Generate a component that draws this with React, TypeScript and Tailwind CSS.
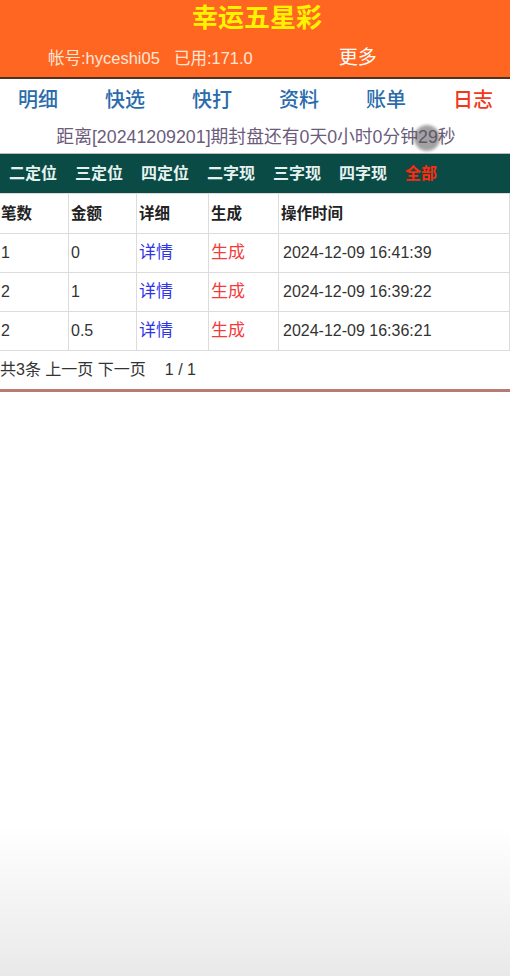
import React from "react";

const FONT = { fontFamily: '"Liberation Sans", "Noto Sans CJK SC", sans-serif' };

const navItems = [
  { label: "明细", active: false },
  { label: "快选", active: false },
  { label: "快打", active: false },
  { label: "资料", active: false },
  { label: "账单", active: false },
  { label: "日志", active: true },
];

const playTabs = [
  { label: "二定位", active: false },
  { label: "三定位", active: false },
  { label: "四定位", active: false },
  { label: "二字现", active: false },
  { label: "三字现", active: false },
  { label: "四字现", active: false },
  { label: "全部", active: true },
];

const records = [
  { count: "1", amount: "0", time: "2024-12-09 16:41:39" },
  { count: "2", amount: "1", time: "2024-12-09 16:39:22" },
  { count: "2", amount: "0.5", time: "2024-12-09 16:36:21" },
];

function Header() {
  return (
    <div className="bg-[#ff6621] h-[79px] border-b-2 border-[#4d3224]">
      <div className="h-[36px] flex items-center justify-center">
        <span className="text-[26px] font-bold text-[#fff200] leading-none pl-[4px]">
          幸运五星彩
        </span>
      </div>
      <div className="h-[41px] flex items-center pt-[4px] text-[#fde6d8]">
        <span className="ml-[48px] text-[16.5px]">帐号:hyceshi05</span>
        <span className="ml-[14px] text-[16.5px]">已用:171.0</span>
        <span className="ml-[86px] text-[19px] text-white">更多</span>
      </div>
    </div>
  );
}

function Nav() {
  return (
    <div className="bg-white">
      <div className="h-[42px] flex items-center pl-[18px] gap-[47px]">
        {navItems.map((item) => (
          <span
            key={item.label}
            className={
              item.active
                ? "text-[20px] font-medium text-[#f0381c]"
                : "text-[20px] font-medium text-[#2a6cab]"
            }
          >
            {item.label}
          </span>
        ))}
      </div>
      <div className="relative h-[32px] flex items-center justify-center">
        <span className="text-[17.8px] text-[#6b5c7c] pl-[2px]">
          距离[20241209201]期封盘还有0天0小时0分钟29秒
        </span>
        {/* touch indicator */}
        <div className="absolute left-[414px] top-[4px] w-[26px] h-[26px] rounded-full bg-[#555]/55 blur-[1.5px]" />
      </div>
    </div>
  );
}

function PlayTabs() {
  return (
    <div className="border-t border-[#bbb]">
      <div className="h-[39px] bg-[#0a4b45] flex items-center pl-[9px] gap-[18px]">
        {playTabs.map((tab) => (
          <span
            key={tab.label}
            className={
              tab.active
                ? "text-[16px] font-bold text-[#ff2a10]"
                : "text-[16px] font-bold text-[#e6f2f0]"
            }
          >
            {tab.label}
          </span>
        ))}
      </div>
    </div>
  );
}

function RecordTable() {
  const cell = "border border-[#dcdcdc] px-[2px] text-left align-middle";
  const head = cell + " font-bold text-[15.5px] text-[#222]";
  return (
    <table className="ml-[-2px] w-[512px] border-collapse text-[16px] text-[#333]">
      <colgroup>
        <col className="w-[70px]" />
        <col className="w-[68px]" />
        <col className="w-[72px]" />
        <col className="w-[70px]" />
        <col />
      </colgroup>
      <thead>
        <tr className="h-[40px]">
          <th className={head}>笔数</th>
          <th className={head}>金额</th>
          <th className={head}>详细</th>
          <th className={head}>生成</th>
          <th className={head}>操作时间</th>
        </tr>
      </thead>
      <tbody>
        {records.map((r) => (
          <tr key={r.time} className="h-[39px]">
            <td className={cell}>{r.count}</td>
            <td className={cell}>{r.amount}</td>
            <td className={cell + " text-[17px] text-[#3035e8]"}>详情</td>
            <td className={cell + " text-[17px] text-[#f23c3c]"}>生成</td>
            <td className={cell + " pl-[4px]"}>{r.time}</td>
          </tr>
        ))}
      </tbody>
    </table>
  );
}

function Pager() {
  return (
    <div className="h-[41px] flex items-center text-[16px] text-[#333] border-b-[3px] border-[#b97a71]">
      <span>共3条 上一页 下一页</span>
      <span className="ml-[19px]">1 / 1</span>
    </div>
  );
}

export default function App() {
  return (
    <div className="h-[976px] w-[510px] flex flex-col bg-white overflow-hidden" style={FONT}>
      <Header />
      <Nav />
      <PlayTabs />
      <RecordTable />
      <Pager />
      <div className="flex-1" />
      <div className="h-[150px] bg-gradient-to-b from-white to-[#e9e9e9]" />
    </div>
  );
}
